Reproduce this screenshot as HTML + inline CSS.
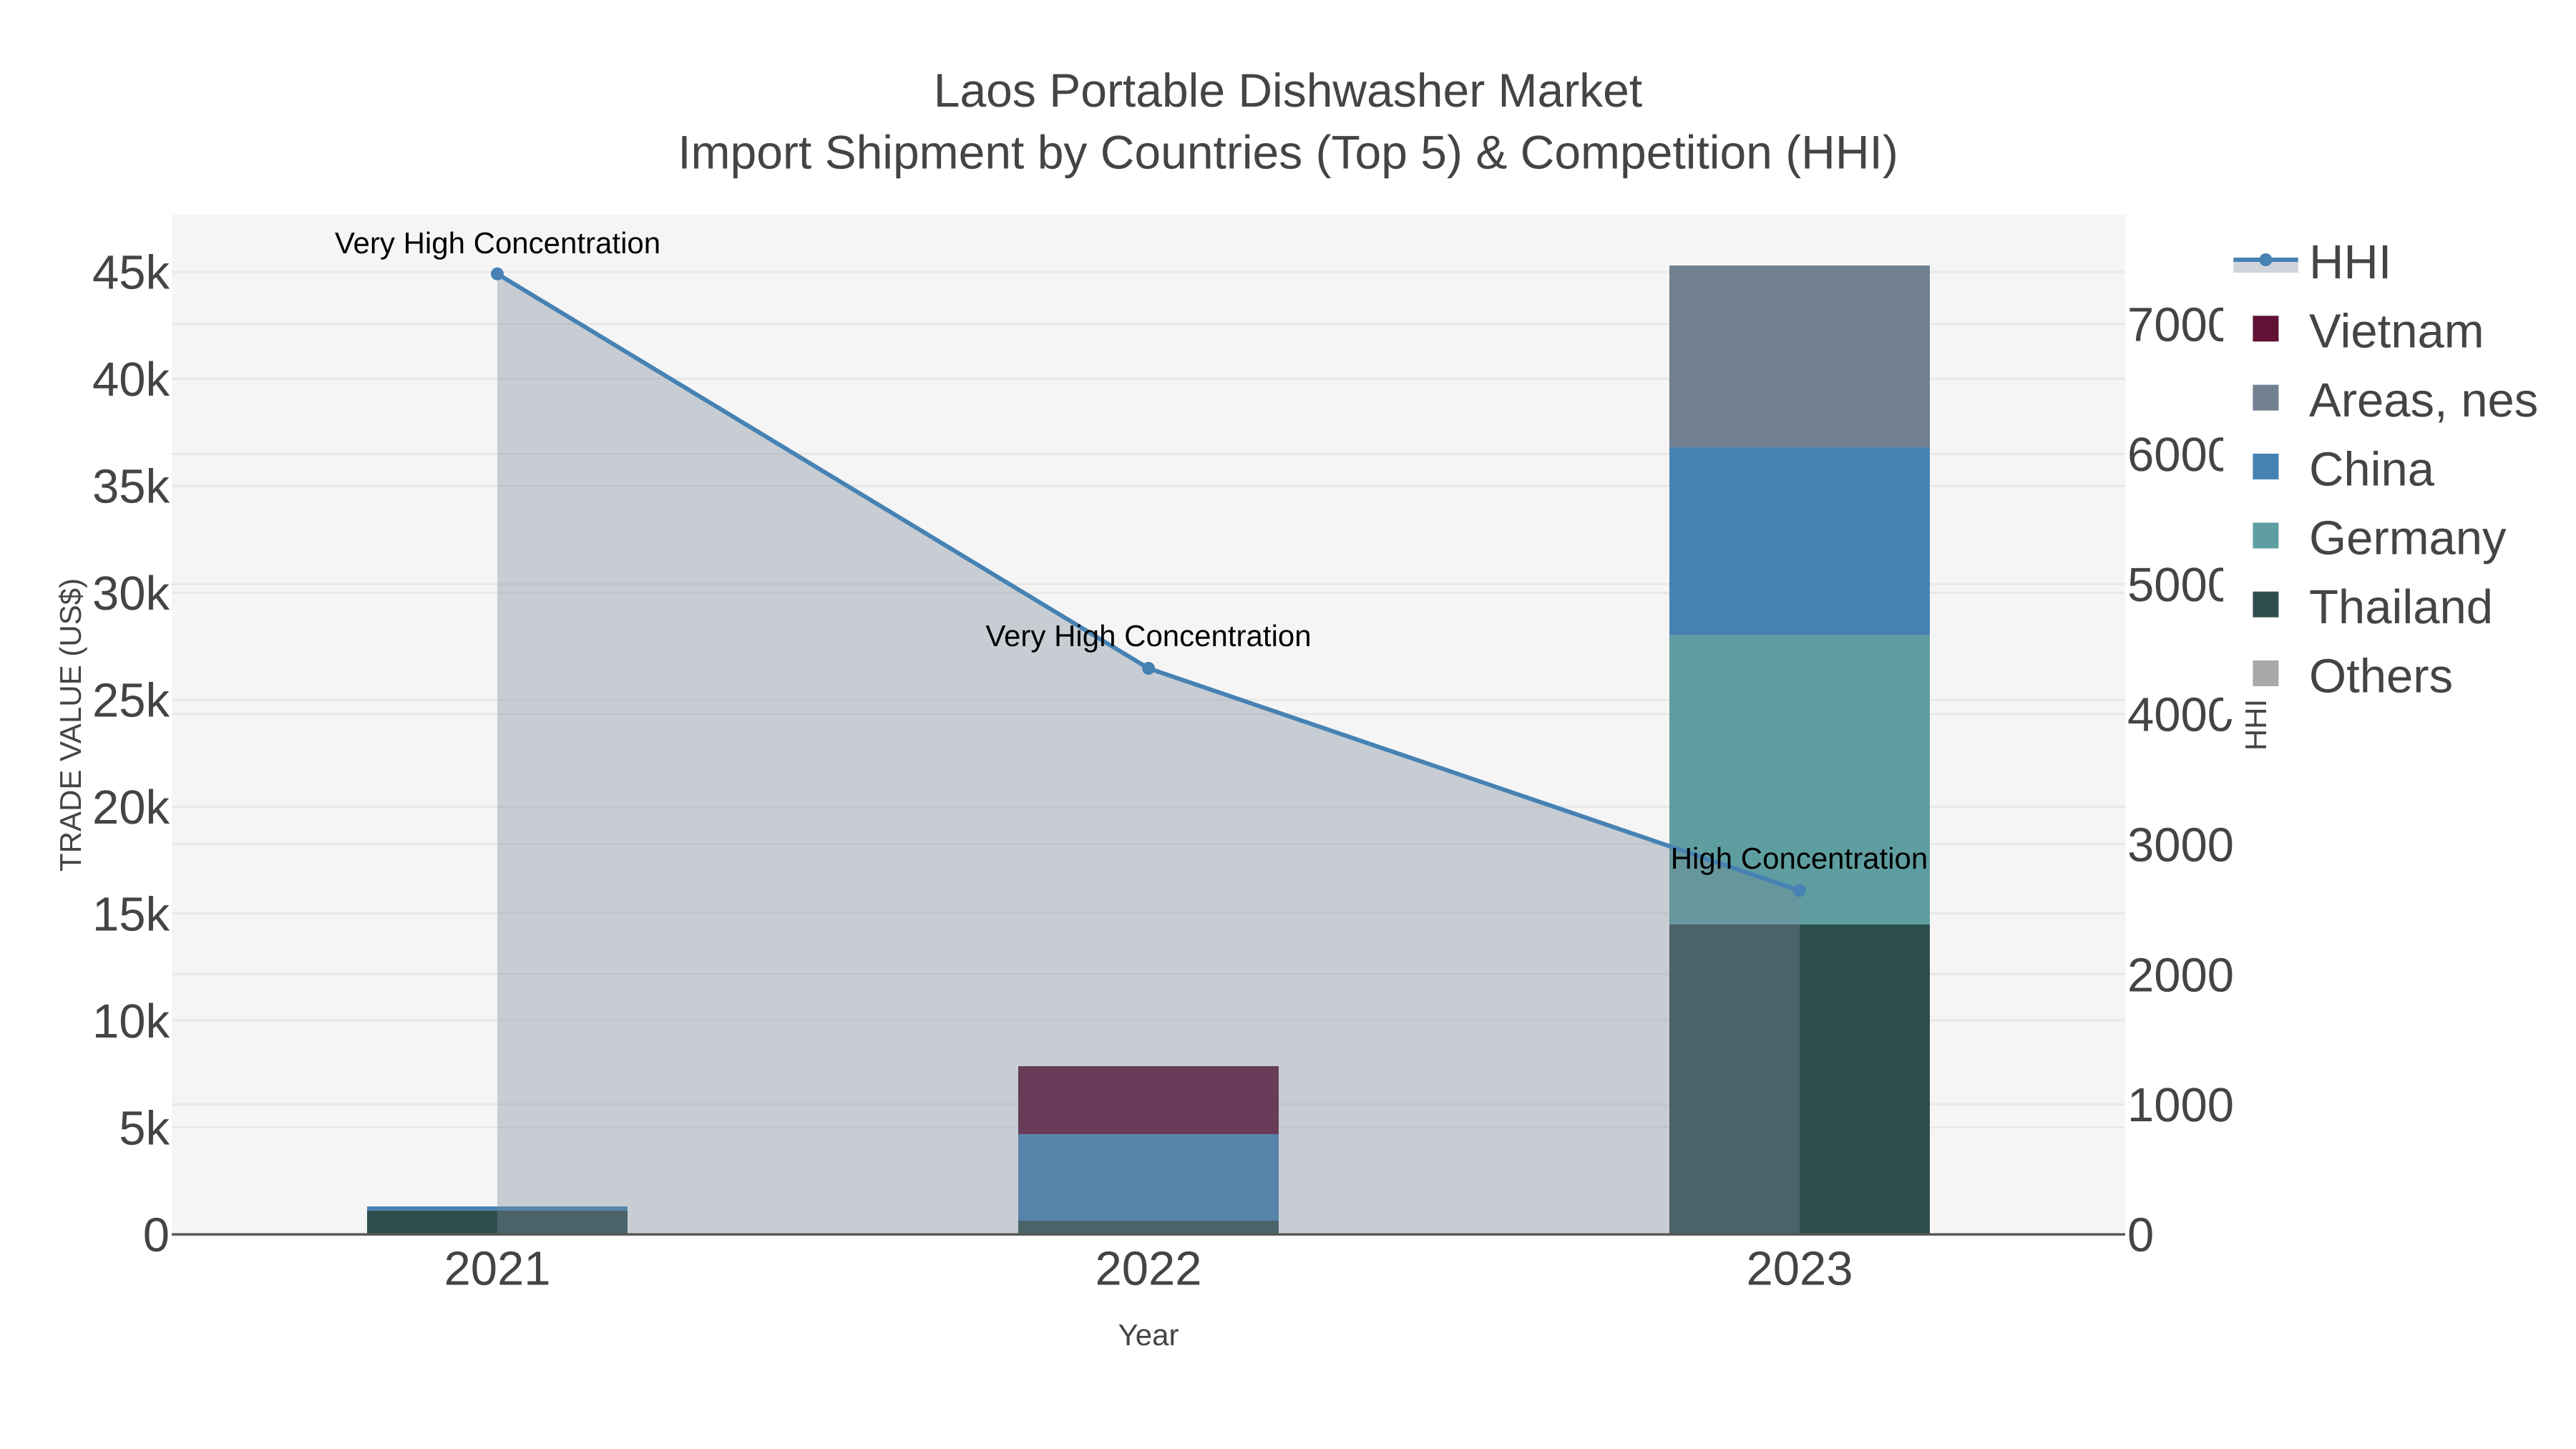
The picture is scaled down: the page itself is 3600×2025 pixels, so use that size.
<!DOCTYPE html>
<html lang="en">
<head>
<meta charset="utf-8">
<title>Laos Portable Dishwasher Market</title>
<style>
html,body{margin:0;padding:0;background:#fff;width:3600px;height:2025px;overflow:hidden}
svg{display:block}
text{font-family:"Liberation Sans",Arial,sans-serif;fill:#444;text-rendering:geometricPrecision;white-space:pre}
.h{font-size:66px}
.t{font-size:67px}
.a{font-size:42px}
.k{font-size:42px;fill:#000;text-anchor:middle}
.l{text-anchor:end}
.c{text-anchor:middle}
</style>
</head>
<body>
<svg xmlns="http://www.w3.org/2000/svg" width="3600" height="2025" viewBox="0 0 3600 2025">
<rect width="3600" height="2025" fill="#fff"/>
<rect x="240" y="300" width="2730" height="1425" fill="#f5f5f5"/>

<!-- gridlines -->
<g stroke="#e8e8e8" stroke-width="3" fill="none">
<path d="M240 380H2970M240 529.3H2970M240 679H2970M240 828.5H2970M240 978H2970M240 1127.5H2970M240 1276.5H2970M240 1426H2970M240 1575.5H2970"/>
<path d="M240 452.7H2970M240 634.4H2970M240 816.2H2970M240 998H2970M240 1179.7H2970M240 1361.5H2970M240 1543.3H2970"/>
</g>

<!-- bars 2021 -->
<rect x="513" y="1691.7" width="364" height="33.3" fill="#2f4f4f"/>
<rect x="513" y="1686" width="364" height="5.7" fill="#4682b4"/>
<!-- bars 2022 -->
<rect x="1423" y="1706" width="364" height="19" fill="#2f4f4f"/>
<rect x="1423" y="1585" width="364" height="121" fill="#4682b4"/>
<rect x="1423" y="1490" width="364" height="95" fill="#601235"/>
<!-- bars 2023 -->
<rect x="2333" y="1292" width="364" height="433" fill="#2f4f4f"/>
<rect x="2333" y="887.7" width="364" height="404.3" fill="#5f9ea0"/>
<rect x="2333" y="624.7" width="364" height="263" fill="#4682b4"/>
<rect x="2333" y="371" width="364" height="253.7" fill="#708090"/>

<!-- HHI -->
<path d="M695 382.7L1605 934L2515 1244.6V1725H695Z" fill="#778899" fill-opacity=".36"/>
<path d="M695 382.7L1605 934L2515 1244.6" fill="none" stroke="#4682b4" stroke-width="6"/>
<circle cx="695" cy="382.7" r="9" fill="#4682b4"/>
<circle cx="1605" cy="934" r="9" fill="#4682b4"/>
<circle cx="2515" cy="1244.6" r="9" fill="#4682b4"/>

<!-- zero line -->
<rect x="240" y="1723.4" width="2730" height="3.4" fill="#555"/>

<!-- point labels -->
<text class="k" x="695.5" y="354">Very High Concentration</text>
<text class="k" x="1605" y="903">Very High Concentration</text>
<text class="k" x="2514.5" y="1214">High Concentration</text>

<!-- title -->
<text class="h c" x="1800" y="149">Laos Portable Dishwasher Market</text>
<text class="h c" x="1800" y="235.6">Import Shipment by Countries (Top 5) &amp; Competition (HHI)</text>

<!-- left ticks -->
<text class="t l" x="237" y="403.5">45k</text>
<text class="t l" x="237" y="553">40k</text>
<text class="t l" x="237" y="702.5">35k</text>
<text class="t l" x="237" y="852">30k</text>
<text class="t l" x="237" y="1001.5">25k</text>
<text class="t l" x="237" y="1151">20k</text>
<text class="t l" x="237" y="1300.5">15k</text>
<text class="t l" x="237" y="1450">10k</text>
<text class="t l" x="237" y="1599.5">5k</text>
<text class="t l" x="237" y="1748.5">0</text>

<!-- right ticks -->
<text class="t" x="2973" y="476.5">7000</text>
<text class="t" x="2973" y="658">6000</text>
<text class="t" x="2973" y="840">5000</text>
<text class="t" x="2973" y="1021.5">4000</text>
<text class="t" x="2973" y="1203.5">3000</text>
<text class="t" x="2973" y="1385.5">2000</text>
<text class="t" x="2973" y="1567">1000</text>
<text class="t" x="2973" y="1748.5">0</text>

<!-- x ticks -->
<text class="t c" x="695" y="1795.5">2021</text>
<text class="t c" x="1605" y="1795.5">2022</text>
<text class="t c" x="2515" y="1795.5">2023</text>

<!-- legend background clips right tick labels -->
<rect x="3107" y="330" width="493" height="675" fill="#fff"/>

<!-- axis titles -->
<text class="a c" x="1605" y="1880">Year</text>
<text class="a c" transform="translate(113 1013) rotate(-90)">TRADE VALUE (US$)</text>
<text class="a c" transform="translate(3167 1013) rotate(-90)">HHI</text>

<!-- legend -->
<rect x="3121.3" y="363" width="90.4" height="18" fill="#778899" fill-opacity=".36"/>
<rect x="3121.3" y="360" width="90.4" height="6" fill="#4682b4"/>
<circle cx="3166.4" cy="363" r="9" fill="#4682b4"/>
<rect x="3148.4" y="441.3" width="36" height="36" fill="#601235"/>
<rect x="3148.4" y="537.7" width="36" height="36" fill="#708090"/>
<rect x="3148.4" y="634" width="36" height="36" fill="#4682b4"/>
<rect x="3148.4" y="730.4" width="36" height="36" fill="#5f9ea0"/>
<rect x="3148.4" y="826.7" width="36" height="36" fill="#2f4f4f"/>
<rect x="3148.4" y="923" width="36" height="36" fill="#a9a9a9"/>
<text class="t" x="3227" y="389">HHI</text>
<text class="t" x="3227" y="485.5">Vietnam</text>
<text class="t" x="3227" y="582">Areas, nes</text>
<text class="t" x="3227" y="678.5">China</text>
<text class="t" x="3227" y="774.5">Germany</text>
<text class="t" x="3227" y="871">Thailand</text>
<text class="t" x="3227" y="967.5">Others</text>
</svg>
</body>
</html>
